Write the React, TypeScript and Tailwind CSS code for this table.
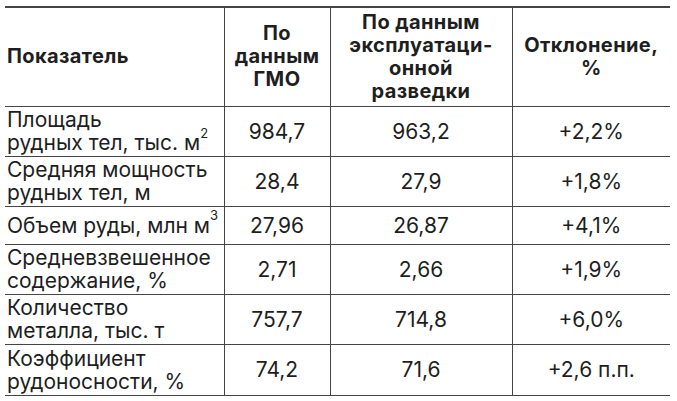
import React from 'react';

interface Row {
  label: React.ReactNode;
  gmo: string;
  expl: string;
  dev: string;
  h: string;
}

const rows: Row[] = [
  {
    label: (
      <>
        Площадь
        <br />
        рудных тел, тыс. м<sup className="text-[13px] align-[6px]">2</sup>
      </>
    ),
    gmo: '984,7',
    expl: '963,2',
    dev: '+2,2%',
    h: 'h-[50px]',
  },
  {
    label: (
      <>
        Средняя мощность
        <br />
        рудных тел, м
      </>
    ),
    gmo: '28,4',
    expl: '27,9',
    dev: '+1,8%',
    h: 'h-[50px]',
  },
  {
    label: (
      <>
        Объем руды, млн м<sup className="text-[13px] align-[6px]">3</sup>
      </>
    ),
    gmo: '27,96',
    expl: '26,87',
    dev: '+4,1%',
    h: 'h-[38px]',
  },
  {
    label: (
      <>
        Средневзвешенное
        <br />
        содержание, %
      </>
    ),
    gmo: '2,71',
    expl: '2,66',
    dev: '+1,9%',
    h: 'h-[50px]',
  },
  {
    label: (
      <>
        Количество
        <br />
        металла, тыс. т
      </>
    ),
    gmo: '757,7',
    expl: '714,8',
    dev: '+6,0%',
    h: 'h-[50px]',
  },
  {
    label: (
      <>
        Коэффициент
        <br />
        рудоносности, %
      </>
    ),
    gmo: '74,2',
    expl: '71,6',
    dev: '+2,6 п.п.',
    h: 'h-[51px]',
  },
];

export default function App() {
  return (
    <div className="w-[677px] h-[401px] bg-white pt-[6px] pl-[5px] font-['Inter',sans-serif] text-[#1e1e1e]">
      <table className="w-[665px] border-collapse table-fixed">
        <colgroup>
          <col className="w-[219px]" />
          <col className="w-[106px]" />
          <col className="w-[182px]" />
          <col className="w-[158px]" />
        </colgroup>
        <thead>
          <tr className="h-[99px] border-t-2 border-b border-[#444] text-[20px] tracking-[0.4px] font-bold leading-[23px]">
            <th className="text-left pl-[2px] font-bold">Показатель</th>
            <th className="text-center border-l border-[#444]">
              По
              <br />
              данным
              <br />
              ГМО
            </th>
            <th className="text-center border-l border-[#444]">
              По данным
              <br />
              эксплуатаци-
              <br />
              онной
              <br />
              разведки
            </th>
            <th className="text-center border-l border-[#444]">
              Отклонение,
              <br />%
            </th>
          </tr>
        </thead>
        <tbody className="text-[21px] leading-[23px]">
          {rows.map((r, i) => (
            <tr key={i} className={`${r.h} border-b border-[#444]`}>
              <td className="text-left pl-[2px] whitespace-nowrap">{r.label}</td>
              <td className="text-center border-l border-[#444]">{r.gmo}</td>
              <td className="text-center border-l border-[#444]">{r.expl}</td>
              <td className="text-center border-l border-[#444]">{r.dev}</td>
            </tr>
          ))}
        </tbody>
      </table>
    </div>
  );
}
